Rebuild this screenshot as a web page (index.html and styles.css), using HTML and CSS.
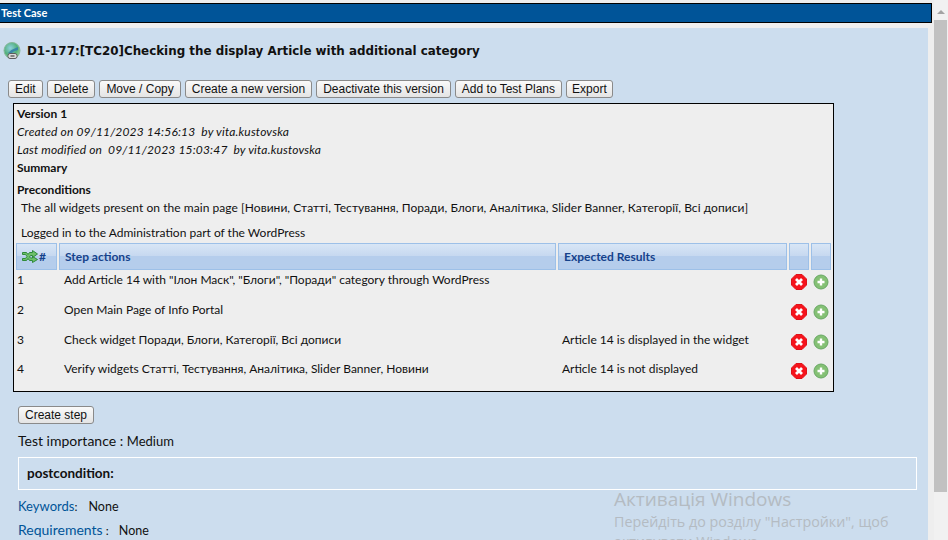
FILE: index.html
```html
<!DOCTYPE html>
<html lang="en">
<head>
  <meta charset="UTF-8" />
  <title>Test Case</title>
  <link rel="stylesheet" href="styles.css">
</head>
<body>
  <div class="page">
    <div class="main">
      <h1 class="bar">Test Case</h1>
      <div class="workframe">
        <h2 class="title">
          <svg class="logo" width="18" height="18" viewBox="0 0 18 18">
            <defs>
              <radialGradient id="globe" cx="0.4" cy="0.35" r="0.7">
                <stop offset="0" stop-color="#8fd0e0"/>
                <stop offset="0.6" stop-color="#52b07c"/>
                <stop offset="1" stop-color="#9ad090"/>
              </radialGradient>
            </defs>
            <circle cx="9" cy="8.500" r="8" fill="url(#globe)" stroke="#86b79a"/>
            <path d="M5 11 Q9 7 15 5 L15 8 Q10 9 8 12 Z" fill="#3a86a8"/>
            <rect x="5" y="11.500" width="9" height="5" rx="2" fill="#dcdcdc" stroke="#5c5c5c"/>
            <path d="M7.500 14h4" stroke="#444" stroke-width="1.200"/>
          </svg>
          D1-177:[TC20]Checking the display Article with additional category
        </h2>

        <div class="actions">
          <button>Edit</button>
          <button>Delete</button>
          <button>Move / Copy</button>
          <button>Create a new version</button>
          <button>Deactivate this version</button>
          <button>Add to Test Plans</button>
          <button>Export</button>
        </div>

        <div class="version">
          <div class="line strong">Version 1</div>
          <div class="line"><em>Created on 09/11/2023 14:56:13 &nbsp;by vita.kustovska</em></div>
          <div class="line"><em>Last modified on &nbsp;09/11/2023 15:03:47 &nbsp;by vita.kustovska</em></div>
          <div class="line strong">Summary</div>
          <div class="line strong pre-head">Preconditions</div>
          <p class="pre-text widgets">The all widgets present on the main page [Новини, Статті, Тестування, Поради, Блоги, Аналітика, Slider Banner, Категорії, Всі дописи]</p>
          <p class="pre-text login">Logged in to the Administration part of the WordPress</p>

          <table class="steps">
            <thead>
              <tr>
                <th class="col-num">
                  <svg width="17" height="13" viewBox="0 0 17 13">
                    <path d="M0.500 2.500h4l1.500 2 1.500-2h3V0.500l5 3.500-5 3.500V5.500h-2l-1 1.500 1 1h2V6.500l5 3-5 3v-2h-3L6 8.500l-1.500 2h-4v-2h3L5 6.500 3.500 4.500h-3z" fill="#6fc06a" stroke="#2f8a3a"/>
                  </svg>#
                </th>
                <th class="col-step">Step actions</th>
                <th class="col-result">Expected Results</th>
                <th class="col-icon"></th>
                <th class="col-icon"></th>
              </tr>
            </thead>
            <tbody>
              <tr>
                <td>1</td>
                <td class="step">Add Article 14 with "Ілон Маск", "Блоги", "Поради" category through WordPress</td>
                <td class="result"></td>
                <td class="icon"><svg width="16" height="16"><use href="#del"/></svg></td>
                <td class="icon"><svg width="16" height="16"><use href="#add"/></svg></td>
              </tr>
              <tr>
                <td>2</td>
                <td class="step">Open Main Page of Info Portal</td>
                <td class="result"></td>
                <td class="icon"><svg width="16" height="16"><use href="#del"/></svg></td>
                <td class="icon"><svg width="16" height="16"><use href="#add"/></svg></td>
              </tr>
              <tr class="short">
                <td>3</td>
                <td class="step">Check widget Поради, Блоги, Категорії, Всі дописи</td>
                <td class="result">Article 14 is displayed in the widget</td>
                <td class="icon"><svg width="16" height="16"><use href="#del"/></svg></td>
                <td class="icon"><svg width="16" height="16"><use href="#add"/></svg></td>
              </tr>
              <tr>
                <td>4</td>
                <td class="step">Verify widgets Статті, Тестування, Аналітика, Slider Banner, Новини</td>
                <td class="result">Article 14 is not displayed</td>
                <td class="icon"><svg width="16" height="16"><use href="#del"/></svg></td>
                <td class="icon"><svg width="16" height="16"><use href="#add"/></svg></td>
              </tr>
            </tbody>
          </table>
        </div>

        <div class="below">
          <button>Create step</button>
          <div class="importance"><b>Test importance :</b> <span class="value">Medium</span></div>
          <div class="postcondition">postcondition:</div>
          <div class="meta"><span class="label">Keywords</span>: <span class="value">None</span></div>
          <div class="meta second"><span class="label long">Requirements</span> : <span class="value">None</span></div>
        </div>
      </div>
    </div>

    <div class="scrollbar">
      <div class="arrow"></div>
      <div class="thumb"></div>
    </div>
  </div>

  <div class="watermark">
    <div class="wm-title">Активація Windows</div>
    <div class="wm-text">Перейдіть до розділу "Настройки", щоб<br>активувати Windows.</div>
  </div>

  <svg class="defs" width="0" height="0">
    <symbol id="del" viewBox="0 0 16 16">
      <path d="M5 0.500h6L15.500 5v6L11 15.500H5L0.500 11V5z" fill="#f5141c" stroke="#e0121a"/>
      <path d="M5 5l6 6M11 5l-6 6" stroke="#fff" stroke-width="2.800"/>
    </symbol>
    <symbol id="add" viewBox="0 0 16 16">
      <circle cx="8" cy="8" r="7" fill="#84c074" stroke="#68a864"/>
      <path d="M8 4.500v7M4.500 8h7" stroke="#fff" stroke-width="2.400"/>
    </symbol>
  </svg>
</body>
</html>
```

FILE: styles.css
```css
html, body {
  margin: 0;
  height: 540px;
  overflow: hidden;
}

body {
  font-family: Lato, "Noto Sans", Arial, sans-serif;
  font-size: 12px;
  background: #eee;
  color: #111;
  position: relative;
}

.page {
  display: flex;
  height: 540px;
}

.main {
  width: 933px;
  padding-top: 3px;
}

.bar {
  margin: 0 1px 5px 0;
  height: 18px;
  line-height: 18px;
  background: #005498;
  border: 1px solid #000;
  border-left: none;
  color: #fff;
  font-size: 11px;
  font-weight: bold;
  padding-left: 1px;
}

.workframe {
  background: #ccddee;
  width: 928px;
  height: 512px;
  box-sizing: border-box;
  overflow: hidden;
}

.title {
  display: flex;
  align-items: center;
  gap: 6px;
  margin: 0;
  padding: 7px 0 7px 3px;
  height: 32px;
  font-family: "DejaVu Sans", Verdana, sans-serif;
  font-size: 11.900px;
  font-weight: bold;
}

.actions {
  display: flex;
  gap: 4px;
  margin: 6px 0 5px 8px;
}

button {
  font-family: "Liberation Sans", Arial, sans-serif;
  font-size: 12px;
  height: 18px;
  padding: 0 6px;
  color: #111;
  background: linear-gradient(#fafafa, #e4e4e4);
  border: 1px solid #8a8a8a;
  border-radius: 3px;
}

.actions button:last-child {
  padding: 0 5px;
}

.version {
  margin-left: 13px;
  width: 821px;
  height: 289px;
  box-sizing: border-box;
  border: 1px solid #000;
  background: #eee;
  padding: 1px 2px 0 2px;
}

.line {
  height: 18px;
  line-height: 18px;
  padding-left: 1px;
}

.line em {
  letter-spacing: 0.170px;
}

.strong {
  font-weight: bold;
}

.pre-head {
  margin-top: 4px;
}

.pre-text {
  margin: 0 0 7px 5px;
  height: 18px;
  line-height: 18px;
}

.widgets {
  letter-spacing: 0.050px;
}

.login {
  margin-bottom: 1px;
}

.steps {
  width: 819px;
  table-layout: fixed;
  border-collapse: separate;
  border-spacing: 2px 0;
  margin-left: -2px;
}

.steps th {
  height: 25px;
  padding: 0 0 0 5px;
  text-align: left;
  color: #15428b;
  font-weight: bold;
  border: 1px solid #9dc0e8;
  background: linear-gradient(#d8e6f6 0%, #c6d8f0 48%, #b5cdec 50%, #b5cdec 100%);
}

.col-num {
  width: 34px;
}

.col-step {
  width: 490px;
}

.col-result {
  width: 222px;
}

.steps th.col-icon {
  width: 18px;
  padding: 0;
}

.col-num svg {
  vertical-align: -2px;
}

.steps td {
  height: 30px;
  box-sizing: border-box;
  padding: 1px 0 0 1px;
  vertical-align: top;
  line-height: 17px;
}

.steps .short td {
  height: 29px;
}

.steps td.step {
  padding-left: 5px;
}

.steps td.result {
  padding-left: 4px;
}

.steps td.icon {
  padding: 4px 0 0 2px;
  line-height: 0;
}

.below {
  padding: 14px 0 0 18px;
}

.importance {
  margin-top: 8px;
  font-size: 14px;
  height: 18px;
  line-height: 18px;
}

.importance b {
  font-weight: normal;
}

.importance .value {
  font-size: 13px;
}

.postcondition {
  margin-top: 7px;
  width: 899px;
  height: 33px;
  line-height: 31px;
  box-sizing: border-box;
  border: 1px solid #fff;
  padding-left: 8px;
  font-size: 13.500px;
  font-weight: bold;
}

.meta {
  margin-top: 7px;
  height: 17px;
  line-height: 19px;
}

.meta.second {
  margin-top: 6px;
}

.label {
  color: #005498;
  font-size: 13px;
}

.label.long {
  font-size: 14px;
}

.meta .value {
  margin-left: 8px;
  font-size: 12.500px;
}

.meta.second .value {
  margin-left: 7px;
}

.scrollbar {
  width: 14px;
  margin-left: 1px;
  background: #f1f1f1;
}

.arrow {
  width: 0;
  height: 0;
  margin: 10px auto 6px;
  border: 4px solid transparent;
  border-top: none;
  border-bottom: 4px solid #a3a3a3;
}

.thumb {
  height: 472px;
  width: 13px;
  background: #c1c1c1;
}

.watermark {
  position: absolute;
  left: 614px;
  top: 487px;
  color: #b4bbc2;
  font-family: "Open Sans", sans-serif;
}

.wm-title {
  font-size: 19px;
  line-height: 24px;
}

.wm-text {
  margin-top: 1px;
  font-size: 14.300px;
  line-height: 20px;
}

.defs {
  position: absolute;
}
```
